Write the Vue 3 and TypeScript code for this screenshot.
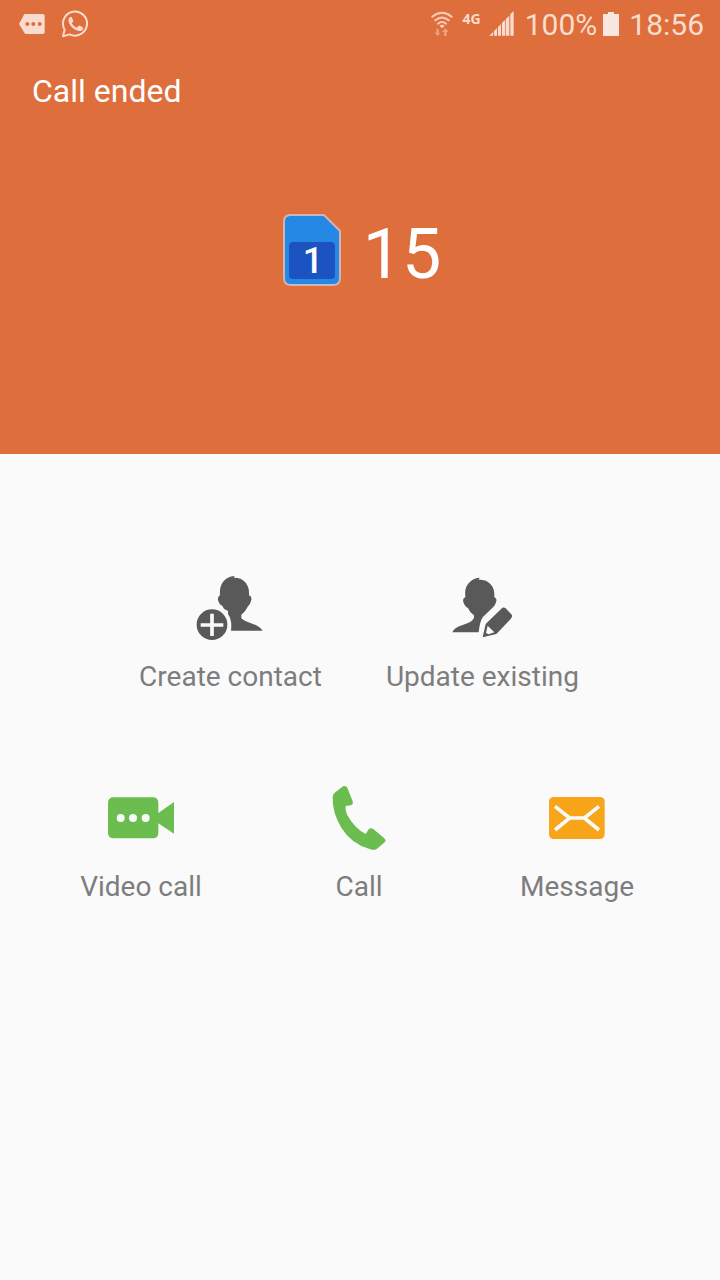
<script setup lang="ts">
import { ref } from 'vue'

const time = ref('18:56')
const battery = ref('100%')
const dialed = ref('15')
</script>

<template>
  <div class="screen">
    <header class="top">
      <div class="status">
        <div class="status-left">
          <svg width="26" height="20" viewBox="57 42 78 60" aria-hidden="true">
            <path fill="#f9dccd" d="M74 42h54q6 0 6 6v48q0 6-6 6H78q-3 0-5-4L57 72 71 46q1-4 3-4z" />
            <g fill="#de6f3c">
              <circle cx="82" cy="72" r="6" />
              <circle cx="100" cy="72" r="6" />
              <circle cx="119" cy="72" r="6" />
            </g>
          </svg>
          <svg width="28" height="28" viewBox="182 30 84 84" aria-hidden="true">
            <path fill="none" stroke="#f9dccd" stroke-width="6" stroke-linejoin="round" d="M188 109l5-20a36 36 0 1 1 15 14z" />
            <path fill="#f9dccd" d="M206 54q3-4 8-3l5 12q0 3-5 7 5 9 15 13l6-6q2-1 4 0l10 6q0 8-8 10-12 2-26-11-15-16-9-28z" />
          </svg>
        </div>
        <div class="status-right">
          <svg class="wifi" width="22" height="28" viewBox="29 30 66 84" aria-hidden="true">
            <g fill="none" stroke="#f9cdb9" stroke-width="6" stroke-linecap="round">
              <path d="M33 50q29-23 58 0M42 61q20-17 40 0M50 71q12-10 24 0" />
            </g>
            <path fill="#f9cdb9" d="M54 77q8-5 16 0l-8 8z" />
            <path fill="#eba184" d="M45 86h7v12h5l-8 10-9-10h5zM68 108h8V96h6L72 85 62 96h6z" />
          </svg>
          <span class="net">4G</span>
          <svg class="signal" width="26" height="26" viewBox="208 34 78 78" aria-hidden="true">
            <path fill="#f9dccd" d="M209 108l11-11v11zM223 94l9-9v23h-9zM235 82l9-9v35h-9zM247 69l10-9v48h-10zM259 57l10-9v60h-10zM272 44l10-10v74h-10z" />
          </svg>
          <span class="percent">{{ battery }}</span>
          <svg class="battery" width="16" height="24" viewBox="0 0 16 24" aria-hidden="true">
            <path fill="#f9e8e0" d="M0 2h5V0h6v2h5v22H0z" />
          </svg>
          <time class="clock">{{ time }}</time>
        </div>
      </div>
      <h1 class="title">Call ended</h1>
      <div class="callee">
        <svg class="sim" width="58" height="72" viewBox="0 0 58 72" role="img" aria-label="SIM 1">
          <path fill="#2588e5" stroke="#d0b3b4" stroke-width="2" d="M7 1h34l16 16v47q0 7-7 7H8q-7 0-7-7V8q0-7 6-7z" />
          <rect x="6" y="28" width="46" height="37" rx="4" fill="#1b54c0" />
          <text x="30" y="59" text-anchor="middle" class="sim-number">1</text>
        </svg>
        <span class="number">{{ dialed }}</span>
      </div>
    </header>

    <main class="actions">
      <div class="contacts">
        <button type="button" class="action">
          <svg width="90" height="85" viewBox="0 0 270 255" aria-hidden="true">
            <path fill="#595959" d="M149 33L146 38Q168 37 180 51Q194 66 192 91Q201 94 199 105Q196 119 189 124Q183 138 169 149L169 160Q176 168 202 176Q223 182 233 197H138Q142 166 129 147L129 137Q115 134 113 123Q103 120 99 105Q97 96 105 91Q103 65 114 51Q126 34 149 33z" />
            <circle cx="81" cy="179" r="46" fill="#595959" />
            <path stroke="#fafafa" stroke-width="11" d="M47 180h68M81 146v67" />
          </svg>
          <span>Create contact</span>
        </button>
        <button type="button" class="action">
          <svg width="90" height="85" viewBox="-9 0 270 255" aria-hidden="true">
            <path fill="#595959" d="M119 38L116 44Q139 43 151 57Q165 71 163 97Q171 100 169 109Q166 121 159 127L128 157Q119 171 116 202H37Q42 187 70 179Q97 171 102 158V151Q88 141 84 129Q75 126 70 111Q67 101 76 97Q73 71 84 57Q97 39 119 38z" />
            <path fill="#595959" fill-rule="evenodd" d="M128 217L137 177 184 131Q190 124 197 130L214 148Q219 154 212 162L169 207zM143 182L138 204 146 208 163 202z" />
          </svg>
          <span>Update existing</span>
        </button>
      </div>
      <div class="calls">
        <button type="button" class="action">
          <svg width="90" height="80" viewBox="-12 0 270 240" aria-hidden="true">
            <path fill="#6bbd50" d="M42 52H158Q175 52 175 69V99L222 66V161L175 130V158Q175 175 158 175H42Q24 175 24 158V69Q24 52 42 52z" />
            <g fill="#fafafa">
              <circle cx="62" cy="114" r="12" />
              <circle cx="99" cy="114" r="12" />
              <circle cx="137" cy="114" r="12" />
            </g>
          </svg>
          <span>Video call</span>
        </button>
        <button type="button" class="action">
          <svg width="80" height="80" viewBox="-3 0 240 240" aria-hidden="true">
            <path fill="#6bbd50" d="M44 38L69 19Q77 15 82 23L98 64Q101 73 92 76L77 78Q75 91 83 107Q105 145 137 162L146 148Q151 142 159 146L192 174Q200 181 194 187L171 206Q163 212 151 208Q94 192 64 143Q37 98 38 53Q38 43 44 38z" />
          </svg>
          <span>Call</span>
        </button>
        <button type="button" class="action">
          <svg width="80" height="80" viewBox="-6 0 240 240" aria-hidden="true">
            <rect x="30" y="51" width="167" height="126" rx="14" fill="#f9a51a" />
            <path fill="none" stroke="#fafafa" stroke-width="11" d="M48 79L92 114 48 150M180 79L136 114 180 150M88 114H140" />
          </svg>
          <span>Message</span>
        </button>
      </div>
    </main>
  </div>
</template>

<style>
body {
  margin: 0;
  background: #fafafa;
}
</style>

<style scoped>
.screen {
  min-height: 100vh;
  background: #fafafa;
  font-family: Roboto, "Liberation Sans", sans-serif;
}

.top {
  background: #de6f3c;
  color: #fff;
  padding-bottom: 164px;
}

.status {
  display: flex;
  justify-content: space-between;
  align-items: center;
  height: 48px;
  padding: 0 16px 0 19px;
  color: #f9dccd;
  font-size: 30px;
  line-height: 36px;
}

.status-left,
.status-right {
  display: flex;
  align-items: center;
}

.status-left {
  gap: 16px;
}

.status-left svg,
.status-right svg {
  display: block;
}

.net {
  margin: 0 8px 10px 10px;
  font: 700 14px/16px "Open Sans", sans-serif;
}

.percent {
  margin: 0 6px 0 10px;
}

.percent,
.clock {
  padding-top: 2px;
}

.clock {
  margin-left: 10px;
}

.title {
  margin: 24px 32px 0;
  font-size: 32px;
  line-height: 38px;
  font-weight: 400;
}

.callee {
  display: flex;
  justify-content: center;
  align-items: center;
  gap: 22px;
  height: 80px;
  margin-top: 100px;
  padding-left: 4px;
}

.sim-number {
  fill: #fff;
  font: 500 36px Roboto, sans-serif;
}

.number {
  padding-top: 8px;
  font-size: 70px;
  line-height: 80px;
}

.actions {
  display: flex;
  flex-direction: column;
  gap: 87px;
  padding: 111px 34px 32px 32px;
}

.contacts {
  display: flex;
  justify-content: center;
  gap: 64px;
}

.calls {
  display: grid;
  grid-template-columns: repeat(3, 1fr);
}

.action {
  display: flex;
  flex-direction: column;
  align-items: center;
  gap: 11px;
  padding: 0;
  border: 0;
  background: none;
  color: #7d7d7d;
  font: 400 28px/32px Roboto, "Liberation Sans", sans-serif;
  white-space: nowrap;
  cursor: pointer;
}
</style>
